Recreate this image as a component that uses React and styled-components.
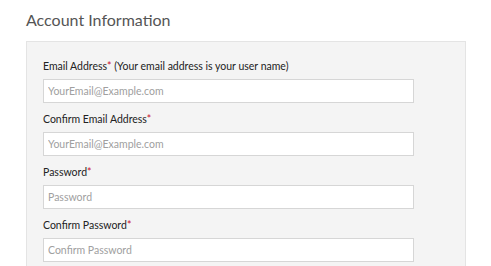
import React from 'react';
import styled, { createGlobalStyle } from 'styled-components';

const Global = createGlobalStyle`
    body {
        margin: 0;
        background: #fff;
        font-family: Lato, "Open Sans", sans-serif;
    }
`

const Page = styled.div`
    padding: 10px 0 0 26px;
`

const Title = styled.h2`
    margin: 0 0 11px;
    font-size: 16px;
    line-height: 20px;
    font-weight: 400;
    color: #555;
`

const Panel = styled.div`
    padding: 17px 16px 6px;
    box-sizing: border-box;
    width: 440px;
    background: #f4f4f4;
    border: 1px solid #e4e4e4;
    border-bottom: none;
    min-height: 225px;
`

const Field = styled.div`
    display: flex;
    flex-direction: column;
    gap: 5px;
    margin-bottom: 9px;
`

const Label = styled.label`
    font-size: 10.5px;
    line-height: 15px;
    color: #222;
    .req {
        color: #c8102e;
    }
`

const Input = styled.input`
    width: 371px;
    height: 24px;
    box-sizing: border-box;
    padding: 0 4px;
    border: 1px solid #d6d6d6;
    border-radius: 0;
    background: #fff;
    font-family: Lato, sans-serif;
    font-size: 10.5px;
    color: #333;
    outline: none;
    &::placeholder {
        color: #a0a0a0;
    }
`

const fields = [
    { label: 'Email Address', note: ' (Your email address is your user name)', placeholder: 'YourEmail@Example.com', type: 'email' },
    { label: 'Confirm Email Address', placeholder: 'YourEmail@Example.com', type: 'email' },
    { label: 'Password', placeholder: 'Password', type: 'password' },
    { label: 'Confirm Password', placeholder: 'Confirm Password', type: 'password' },
]

export default function App() {
    return (
        <Page>
            <Global />
            <Title>Account Information</Title>
            <Panel>
                {fields.map((f) => (
                    <Field key={f.label}>
                        <Label>
                            {f.label}<span className="req">*</span>{f.note}
                        </Label>
                        <Input type={f.type} placeholder={f.placeholder} />
                    </Field>
                ))}
            </Panel>
        </Page>
    )
}
